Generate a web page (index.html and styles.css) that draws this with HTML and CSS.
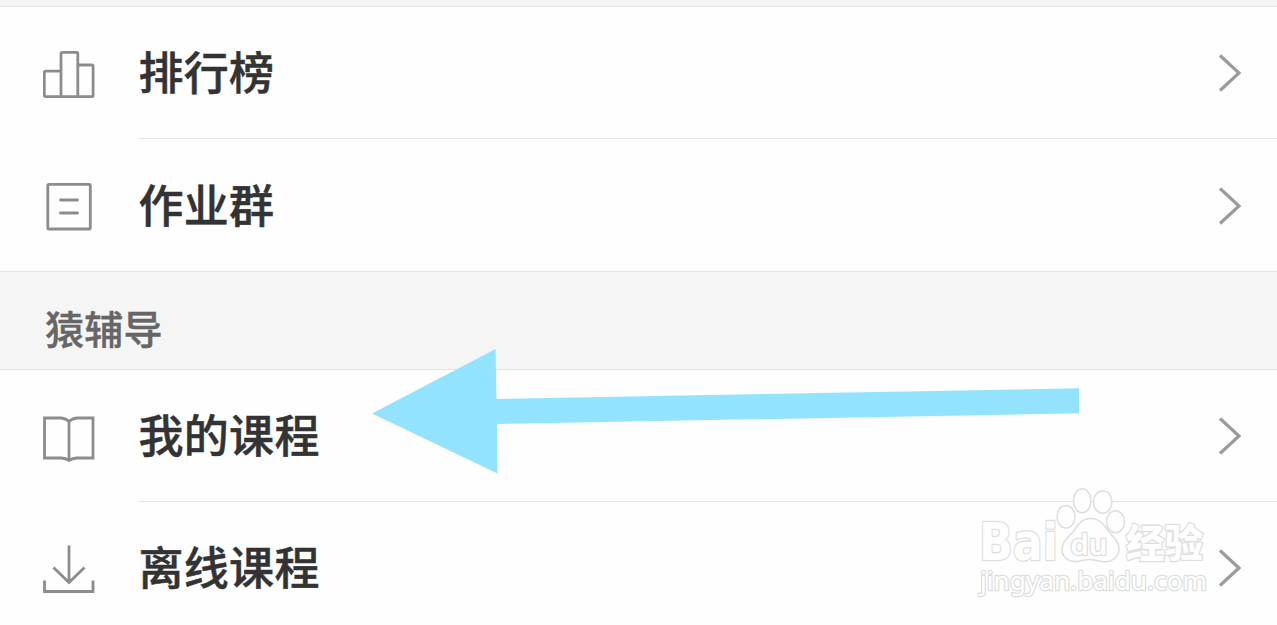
FILE: index.html
```html
<!DOCTYPE html>
<html lang="zh-CN">
<head>
  <meta charset="UTF-8" />
  <title>猿辅导</title>
  <link rel="stylesheet" href="styles.css">
</head>
<body>
  <div class="top-gap"></div>

  <!-- 班级 -->
  <ul class="menu">
    <li class="menu-item">
      <svg class="icon" viewBox="0 0 52 52">
        <path d="M1.3 48.7V24.5q0-1.3 1.3-1.3H18M18 48.7V5.6q0-1.3 1.3-1.3h14.2q1.3 0 1.3 1.3v43.1M34.8 17h14q1.3 0 1.3 1.3v29.1q0 1.3-1.3 1.3H2.6q-1.3 0-1.3-1.3" />
      </svg>
      <div class="menu-body">
        <span class="menu-text">排行榜</span>
        <svg class="chevron" viewBox="0 0 24 40"><path d="M2 2.5l19 17.5L2 37.5" /></svg>
      </div>
    </li>
    <li class="menu-item last">
      <svg class="icon" viewBox="0 0 52 52">
        <rect x="4.8" y="4.3" width="42.5" height="44.7" rx="1.3" />
        <path d="M17.5 20h17M17.5 33h17" stroke-linecap="round" />
      </svg>
      <div class="menu-body">
        <span class="menu-text">作业群</span>
        <svg class="chevron" viewBox="0 0 24 40"><path d="M2 2.5l19 17.5L2 37.5" /></svg>
      </div>
    </li>
  </ul>

  <h2 class="section-title">猿辅导</h2>

  <!-- 课程 -->
  <ul class="menu">
    <li class="menu-item">
      <svg class="icon" viewBox="0 0 52 52">
        <path d="M1.5 7H18q5 .5 8 3.5q3-3 8-3.5h16v40H34q-5 .2-8 2.500q-3-2.300-8-2.500H1.500zM26 10v39" />
      </svg>
      <div class="menu-body">
        <span class="menu-text">我的课程</span>
        <svg class="chevron" viewBox="0 0 24 40"><path d="M2 2.5l19 17.5L2 37.5" /></svg>
      </div>
    </li>
    <li class="menu-item">
      <svg class="icon" viewBox="0 0 52 52">
        <path d="M26 2.5V39M10.5 24.5L26 39.5L41.5 24.5M1.5 37.5v11h48.500v-11" />
      </svg>
      <div class="menu-body">
        <span class="menu-text">离线课程</span>
        <svg class="chevron" viewBox="0 0 24 40"><path d="M2 2.5l19 17.5L2 37.5" /></svg>
      </div>
    </li>
  </ul>

  <!-- 指向“我的课程”的箭头 -->
  <svg class="arrow" viewBox="0 0 708 125">
    <path d="M0 64.5L123.5 0L124.5 50L707 39.3V64.3L125 75L125.5 124.5z" />
  </svg>

  <!-- 水印 -->
  <svg class="watermark" viewBox="0 0 250 135">
    <text class="wm-bold" x="9" y="74.500" font-size="51" textLength="79" lengthAdjust="spacingAndGlyphs">Bai</text>
    <ellipse cx="96" cy="31.700" rx="9" ry="11.300" />
    <ellipse cx="112.200" cy="15.700" rx="8.700" ry="12" />
    <ellipse cx="132.700" cy="17" rx="9.200" ry="11.300" />
    <ellipse cx="145.500" cy="36.700" rx="9" ry="11" />
    <path d="M120.500 33.500c-8 0-12 5-16 11.500c-4 6-12.500 10-12.500 19.500c0 7 6 12.500 13.500 12c6-.4 8-2 14-2s8 2 14 2.200c9 .3 15.500-5 15.500-13c0-9-8-13-12-19.500C133 38.500 129 33.500 120.500 33.500z" />
    <text class="wm-du" x="100.500" y="70" font-size="29" textLength="37" lengthAdjust="spacingAndGlyphs">du</text>
    <text class="wm-cjk" x="156" y="71.500" font-size="39" textLength="77" lengthAdjust="spacingAndGlyphs">经验</text>
    <text class="wm-url" x="10" y="105" font-size="26" textLength="227" lengthAdjust="spacingAndGlyphs">jingyan.baidu.com</text>
  </svg>
</body>
</html>
```
FILE: styles.css
```css
* {
  box-sizing: border-box;
}
html {
  overflow: hidden;
}
body {
  position: relative;
  height: 625px;
  margin: 0;
  overflow: hidden;
  font-family: "Noto Sans CJK SC", "Microsoft YaHei", sans-serif;
  color: #333;
  background-color: #fefefe;
}
.top-gap {
  height: 7px;
  background-color: #f5f5f5;
  border-bottom: 1px solid #e4e4e4;
}

/* 菜单列表 */
.menu {
  margin: 0;
  padding: 0;
  list-style: none;
}
.menu-item {
  display: flex;
  align-items: center;
  gap: 44px;
  height: 132px;
  padding-left: 43px;
}
.icon {
  flex-shrink: 0;
  width: 52px;
  height: 52px;
  margin-top: 2px;
  fill: none;
  stroke: #8c8c8c;
  stroke-width: 2.8;
}
.menu-body {
  display: flex;
  flex: 1;
  align-items: center;
  justify-content: space-between;
  height: 100%;
  padding-right: 35px;
  border-bottom: 1px solid #e4e4e4;
}
.last .menu-body {
  border-bottom: none;
}
.menu-text {
  margin: -3px 0 0 -0.5px;
  font-size: 45px;
  font-weight: 500;
  line-height: 64px;
  letter-spacing: 0.3px;
  -webkit-text-stroke: 0.5px #333;
}
.chevron {
  width: 24px;
  height: 40px;
  margin-top: 1px;
  fill: none;
  stroke: #9b9b9b;
  stroke-width: 3.2;
}

/* 分组标题 */
.section-title {
  height: 99px;
  margin: 0;
  padding: 15px 0 0 45px;
  font-size: 39px;
  font-weight: 500;
  line-height: 80px;
  letter-spacing: 0.3px;
  color: #666;
  background-color: #f5f5f5;
  border-top: 1px solid #e4e4e4;
  border-bottom: 1px solid #e4e4e4;
  -webkit-text-stroke: 0.4px #666;
}

/* 箭头 */
.arrow {
  position: absolute;
  left: 372px;
  top: 349px;
  width: 708px;
  height: 125px;
  fill: #94e3fe;
}

/* 水印 */
.watermark {
  position: absolute;
  left: 970px;
  top: 485px;
  width: 250px;
  height: 135px;
  fill: #fefefe;
  stroke: #dedede;
  stroke-width: 1.5;
}
.watermark text {
  paint-order: stroke;
  stroke-width: 2.6;
  stroke-linejoin: round;
}
.wm-bold {
  font-family: "DejaVu Sans", sans-serif;
  font-weight: bold;
}
.wm-du {
  font-family: "Noto Sans", sans-serif;
  font-weight: 600;
}
.wm-cjk {
  font-weight: 900;
}
.wm-url {
  font-family: "Noto Sans", sans-serif;
}
```
